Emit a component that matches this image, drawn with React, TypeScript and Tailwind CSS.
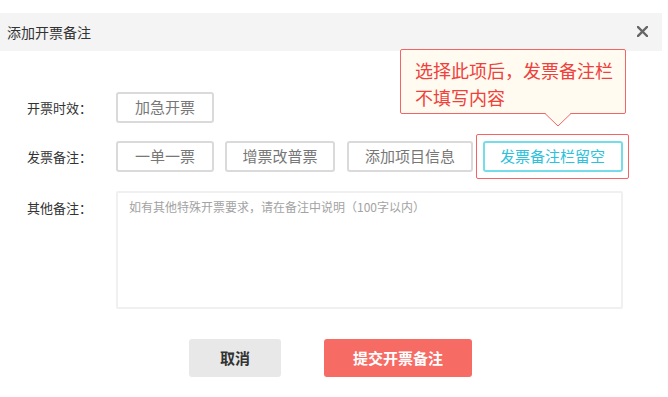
import React from "react";

const font = { fontFamily: '"Noto Sans CJK SC", "Noto Sans", sans-serif' };

function OptBtn({ children, w }: { children: React.ReactNode; w: string }) {
  return (
    <div
      className={`${w} h-[31px] flex items-center justify-center border-2 border-[#dadada] rounded-[3px] text-[15px] text-[#777] bg-white`}
    >
      {children}
    </div>
  );
}

export default function App() {
  return (
    <div className="w-[668px] h-[397px] bg-white relative overflow-hidden" style={font}>
      <div className="pt-[13px]">
        <div className="w-[662px] h-[38px] bg-[#f4f4f4] flex items-center justify-between pl-[7px] pr-[14px]">
          <span className="text-[14px] text-[#333] leading-none">添加开票备注</span>
          <svg width="11" height="11" viewBox="0 0 11 11" className="mb-[2px]">
            <path d="M1 1 L10 10 M10 1 L1 10" stroke="#666" strokeWidth="2.4" strokeLinecap="square" />
          </svg>
        </div>

        {/* Row 1 */}
        <div className="mt-[41px] flex items-center h-[31px]">
          <div className="w-[116px] pl-[27px] text-[13px] text-[#333]">开票时效：</div>
          <OptBtn w="w-[98px]">加急开票</OptBtn>
        </div>

        {/* Row 2 */}
        <div className="mt-[11px] flex items-center h-[45px]">
          <div className="w-[116px] pl-[27px] text-[13px] text-[#333]">发票备注：</div>
          <OptBtn w="w-[98px]">一单一票</OptBtn>
          <div className="ml-[11px]">
            <OptBtn w="w-[110px]">增票改普票</OptBtn>
          </div>
          <div className="ml-[12px]">
            <OptBtn w="w-[126px]">添加项目信息</OptBtn>
          </div>
          <div className="ml-[3px] w-[153px] h-[45px] border border-[#f46464] rounded-[2px] flex items-center justify-center">
            <div className="w-[140px] h-[31px] flex items-center justify-center border-2 border-[#74dde9] rounded-[3px] text-[15px] text-[#2cc1dc] bg-white">
              发票备注栏留空
            </div>
          </div>
        </div>

        {/* Row 3 */}
        <div className="mt-[12px] flex items-start">
          <div className="w-[116px] pl-[27px] pt-[7px] text-[13px] text-[#333]">其他备注：</div>
          <textarea
            className="w-[507px] h-[118px] resize-none border-2 border-[#f0f0f0] rounded-[2px] px-[11px] pt-[5px] text-[12px] leading-[18px] text-[#333] placeholder:text-[#a3a3a3] outline-none"
            style={font}
            placeholder="如有其他特殊开票要求，请在备注中说明（100字以内）"
          />
        </div>

        {/* Buttons */}
        <div className="mt-[30px] flex items-center pl-[189px] gap-[43px]">
          <div className="w-[92px] h-[38px] bg-[#e8e8e8] rounded-[3px] flex items-center justify-center text-[15px] font-bold text-[#333]">
            取消
          </div>
          <div className="w-[148px] h-[38px] bg-[#f66b64] rounded-[3px] flex items-center justify-center text-[15px] font-bold text-white">
            提交开票备注
          </div>
        </div>
      </div>

      {/* Tooltip */}
      <div className="absolute left-[400px] top-[49px] w-[226px] h-[65px] bg-[#fffbf0] border border-[#f46464] rounded-[2px] pl-[14px] pt-[7px]">
        <div className="text-[18px] leading-[27px] text-[#f0403c]">选择此项后，发票备注栏</div>
        <div className="text-[18px] leading-[27px] text-[#f0403c]">不填写内容</div>
        <svg
          className="absolute left-[144px] top-[63px]"
          width="26"
          height="14"
          viewBox="0 0 26 14"
        >
          <polygon points="0,0 13,13 26,0" fill="#fffbf0" />
          <polyline points="0,0.5 13,13 26,0.5" fill="none" stroke="#f46464" strokeWidth="1" />
        </svg>
      </div>
    </div>
  );
}
